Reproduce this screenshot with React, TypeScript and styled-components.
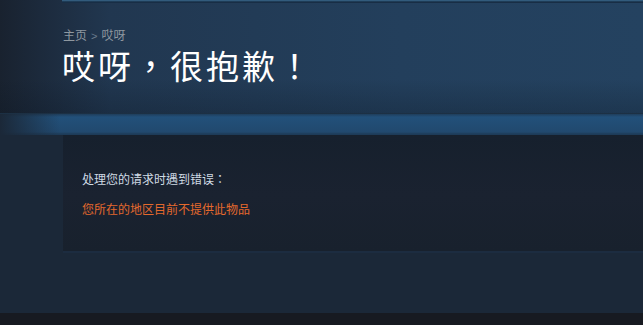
import React from "react"
import styled, { createGlobalStyle } from "styled-components"

const GlobalStyle = createGlobalStyle`
  html, body {
    margin: 0;
    padding: 0;
    background: #1b2838;
  }
  body {
    font-family: "Noto Sans CJK TC", "Noto Sans CJK SC", "Noto Sans", Arial, sans-serif;
  }
`

const App = () => {
  return (
    <Page>
      <GlobalStyle />
      <HeaderStyled>
        <TabStrip />
        <HeaderInner>
          <Breadcrumb>
            <a>主页</a>
            <span className="sep">&gt;</span>
            <a>哎呀</a>
          </Breadcrumb>
          <Title>哎呀，很抱歉！</Title>
        </HeaderInner>
      </HeaderStyled>
      <Band />
      <Body>
        <Panel>
          <Message>处理您的请求时遇到错误：</Message>
          <ErrorText>您所在的地区目前不提供此物品</ErrorText>
        </Panel>
      </Body>
      <Footer />
    </Page>
  )
}

const Page = styled.div`
  display: flex;
  flex-direction: column;
  height: 100vh;
  background: linear-gradient(to right, #1a2535 0, #1b2838 60px);
`

const HeaderStyled = styled.header`
  display: flex;
  flex-direction: column;
  height: 113px;
  background:
    linear-gradient(to bottom, rgba(0, 0, 0, 0) 70%, rgba(10, 20, 32, 0.25) 100%),
    linear-gradient(to right, #19222f 0, #1c2a3c 40px, #213750 110px, #233f5c 400px, #244260 100%);
`

const TabStrip = styled.div`
  height: 3px;
  margin-left: 62px;
  background: linear-gradient(to bottom, #3a6485 0, #2a5273 1px, #13263a 2px, #1d3550 3px);
`

const HeaderInner = styled.div`
  display: flex;
  flex-direction: column;
  padding: 25px 0 0 63px;
  font-family: "Liberation Sans", "Noto Sans CJK TC", "Noto Sans CJK SC", sans-serif;
`

const Breadcrumb = styled.div`
  display: flex;
  align-items: center;
  gap: 4px;
  font-size: 12px;
  line-height: 16px;
  color: #8f98a0;

  a {
    color: #8f98a0;
  }

  .sep {
    font-size: 11px;
    color: #6b7b8c;
  }
`

const Title = styled.h1`
  margin: 4px 0 0 -1px;
  font-size: 33px;
  line-height: 40px;
  font-weight: 400;
  letter-spacing: 3px;
  color: #ffffff;
`

const Band = styled.div`
  height: 21px;
  border-top: 1px solid #1c3044;
  background:
    linear-gradient(to right, #1b2838 0, rgba(27, 40, 56, 0) 60px),
    linear-gradient(to bottom, #1f3d5a 0, #22507a 3px, #21496e 18px, #1d3b58 20px);
`

const Body = styled.div`
  display: flex;
  flex-direction: column;
  flex: 1;
  padding-left: 63px;
  background: #1b2838;
`

const Panel = styled.section`
  display: flex;
  flex-direction: column;
  gap: 14px;
  height: 116px;
  box-sizing: border-box;
  padding: 36px 19px 0;
  background: linear-gradient(to bottom, #16202d 0, #1a2230 60px, #18212d 100%);
  box-shadow: 0 2px 0 #1c2c40;
`

const Message = styled.div`
  font-size: 12px;
  line-height: 16px;
  color: #d0dbe4;
`

const ErrorText = styled.div`
  font-size: 12px;
  line-height: 16px;
  color: #e4692d;
`

const Footer = styled.footer`
  height: 12px;
  background: #171a21;
`

export default App
